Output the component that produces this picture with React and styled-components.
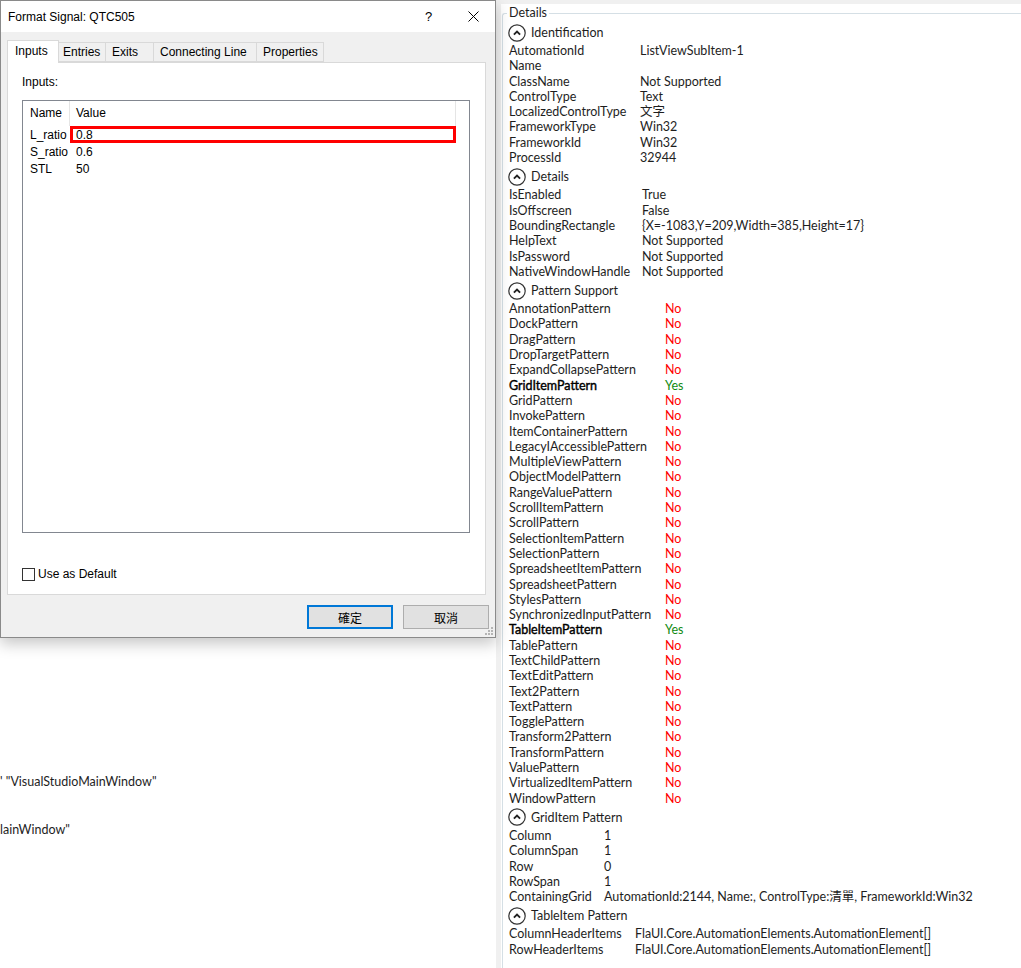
import React from "react";
import styled, { createGlobalStyle } from "styled-components";

const GlobalStyle = createGlobalStyle`
  html, body {
    margin: 0;
    padding: 0;
    background: #fff;
  }
  body {
    width: 1021px;
    height: 968px;
    overflow: hidden;
    font-family: "Liberation Sans", "Noto Sans CJK TC", sans-serif;
  }
`;

const uiFont = `"Lato", "Noto Sans CJK TC", sans-serif`;

const Page = styled.div`
  display: flex;
  width: 1021px;
  height: 968px;
  overflow: hidden;
`;

/* ---------- left: dialog over the background window ---------- */

const LeftPane = styled.div`
  width: 496px;
  flex: none;
  display: flex;
  flex-direction: column;
  position: relative;
  z-index: 1;
`;

const Dialog = styled.div`
  width: 496px;
  height: 638px;
  box-sizing: border-box;
  border: 1px solid #8a8a8a;
  background: #f0f0f0;
  box-shadow: 0 6px 14px rgba(0, 0, 0, 0.22);
  display: flex;
  flex-direction: column;
  position: relative;
  flex: none;
`;

const TitleBar = styled.div`
  height: 31px;
  flex: none;
  background: #fff;
  display: flex;
  align-items: center;
`;

const Title = styled.div`
  flex: 1;
  padding-left: 7px;
  font-size: 12px;
  color: #000;
`;

const CaptionButton = styled.div`
  width: ${(p) => p.w || 45}px;
  height: 31px;
  display: flex;
  align-items: center;
  justify-content: center;
  font-size: 13px;
  color: #000;
`;

const DialogBody = styled.div`
  padding: 8px 6px 0 6px;
  display: flex;
  flex-direction: column;
`;

const TabRow = styled.div`
  display: flex;
  align-items: flex-end;
  height: 23px;
  margin-bottom: -1px;
  position: relative;
  z-index: 1;
`;

const Tab = styled.div`
  box-sizing: border-box;
  width: ${(p) => p.w}px;
  height: ${(p) => (p.active ? 23 : 20)}px;
  margin-bottom: ${(p) => (p.active ? 0 : 1)}px;
  margin-left: ${(p) => (p.first ? 0 : -1)}px;
  padding-left: ${(p) => p.pad || 6}px;
  padding-top: ${(p) => (p.active ? 3 : 2)}px;
  background: ${(p) => (p.active ? "#fff" : "#f0f0f0")};
  border: 1px solid #d9d9d9;
  border-bottom: ${(p) => (p.active ? "none" : "1px solid #d9d9d9")};
  position: relative;
  z-index: ${(p) => (p.active ? 2 : 1)};
  font-size: 12px;
  line-height: 15px;
  color: #000;
  white-space: nowrap;
`;

const TabPanel = styled.div`
  width: 479px;
  height: 533px;
  box-sizing: border-box;
  background: #fff;
  border: 1px solid #d9d9d9;
  padding: 11px 0 0 14px;
`;

const PanelLabel = styled.div`
  font-size: 12px;
  line-height: 16px;
  color: #000;
`;

const ListBox = styled.div`
  margin-top: 10px;
  width: 448px;
  height: 433px;
  box-sizing: border-box;
  border: 1px solid #828790;
  background: #fff;
`;

const ListHeader = styled.div`
  display: flex;
  height: 25px;
`;

const HeaderCell = styled.div`
  box-sizing: border-box;
  width: ${(p) => p.w}px;
  padding-left: ${(p) => p.pad}px;
  border-right: 1px solid #e5e5e5;
  font-size: 12px;
  line-height: 25px;
  color: #000;
`;

const ListRow = styled.div`
  display: flex;
  height: 17px;
`;

const Cell = styled.div`
  box-sizing: border-box;
  width: ${(p) => p.w}px;
  height: 17px;
  padding-left: ${(p) => (p.marked ? 3 : p.pad)}px;
  border: ${(p) => (p.marked ? "3px solid #ff0000" : "none")};
  font-size: 12px;
  line-height: ${(p) => (p.marked ? 12 : 18)}px;
  color: #000;
`;

const CheckRow = styled.div`
  margin-top: 34px;
  display: flex;
  align-items: center;
  gap: 3px;
  font-size: 12px;
  color: #000;
`;

const CheckBox = styled.div`
  width: 13px;
  height: 13px;
  box-sizing: border-box;
  border: 1px solid #333;
  background: #fff;
`;

const ButtonRow = styled.div`
  margin-top: 10px;
  display: flex;
  justify-content: flex-end;
  gap: 10px;
`;

const Button = styled.div`
  width: 86px;
  height: 24px;
  box-sizing: border-box;
  background: #e1e1e1;
  border: ${(p) => (p.primary ? "2px solid #0078d7" : "1px solid #adadad")};
  display: flex;
  align-items: center;
  justify-content: center;
  font-family: "Noto Sans CJK TC", sans-serif;
  font-size: 12px;
  color: #000;
`;

const Grip = styled.svg`
  position: absolute;
  right: 1px;
  bottom: 1px;
`;

const Backdrop = styled.div`
  flex: 1;
  font-family: ${uiFont};
  font-size: 12.5px;
  color: #1e1e1e;
`;

const BackdropLine = styled.div`
  margin-top: ${(p) => p.top}px;
  line-height: 16px;
  white-space: nowrap;
`;

/* ---------- right: details pane ---------- */

const RightPane = styled.div`
  flex: 1;
  min-width: 0;
  background: #fff;
  border-top: 4px solid #f0f0f0;
  border-left: 5px solid #f0f0f0;
  padding-left: 1px;
  overflow: hidden;
  font-family: ${uiFont};
  color: #1e1e1e;
`;

const GroupBox = styled.fieldset`
  margin: 0;
  padding: 0 0 0 6px;
  min-width: 0;
  height: 1000px;
  border: 1px solid #d5dfe5;
  border-right: none;
  border-bottom: none;
  border-radius: 3px 0 0 0;
`;

const Legend = styled.legend`
  padding: 0 2px;
  margin-left: -2px;
  font-size: 12.5px;
  line-height: 18px;
  color: #1e1e1e;
`;

const SectionHeader = styled.div`
  display: flex;
  align-items: center;
  gap: 5px;
  height: 21px;
  margin-top: ${(p) => (p.first ? 0 : 1)}px;
  margin-left: -1px;
  font-size: 12.5px;
`;

const Rows = styled.div`
  display: grid;
  grid-template-columns: ${(p) => p.label}px 1fr;
  grid-auto-rows: 15.3px;
  line-height: 15.3px;
  font-size: 12.5px;
  white-space: nowrap;
`;

const Label = styled.div`
  color: ${(p) => (p.strong ? "#000" : "#1e1e1e")};
  -webkit-text-stroke: ${(p) => (p.strong ? "0.4px #000" : "0")};
`;

const Value = styled.div`
  color: ${(p) => (p.state === "yes" ? "#108a10" : p.state === "no" ? "#ff0000" : "#1e1e1e")};
`;

const CollapseIcon = () => (
  <svg width="18" height="18" viewBox="0 0 18 18">
    <circle cx="9" cy="9" r="8.2" fill="none" stroke="#333" strokeWidth="1.2" />
    <path d="M5.9 10.6 L9 7.5 L12.1 10.6" fill="none" stroke="#222" strokeWidth="1.9" />
  </svg>
);

const Section = ({ title, label, rows, first }) => (
  <>
    <SectionHeader first={first}>
      <CollapseIcon />
      <span>{title}</span>
    </SectionHeader>
    <Rows label={label}>
      {rows.map(([k, v, state]) => (
        <React.Fragment key={k}>
          <Label strong={state === "yes"}>{k}</Label>
          <Value state={state}>{v}</Value>
        </React.Fragment>
      ))}
    </Rows>
  </>
);

const identification = [
  ["AutomationId", "ListViewSubItem-1"],
  ["Name", ""],
  ["ClassName", "Not Supported"],
  ["ControlType", "Text"],
  ["LocalizedControlType", "文字"],
  ["FrameworkType", "Win32"],
  ["FrameworkId", "Win32"],
  ["ProcessId", "32944"],
];

const details = [
  ["IsEnabled", "True"],
  ["IsOffscreen", "False"],
  ["BoundingRectangle", "{X=-1083,Y=209,Width=385,Height=17}"],
  ["HelpText", "Not Supported"],
  ["IsPassword", "Not Supported"],
  ["NativeWindowHandle", "Not Supported"],
];

const patternNames = [
  "AnnotationPattern",
  "DockPattern",
  "DragPattern",
  "DropTargetPattern",
  "ExpandCollapsePattern",
  "GridItemPattern",
  "GridPattern",
  "InvokePattern",
  "ItemContainerPattern",
  "LegacyIAccessiblePattern",
  "MultipleViewPattern",
  "ObjectModelPattern",
  "RangeValuePattern",
  "ScrollItemPattern",
  "ScrollPattern",
  "SelectionItemPattern",
  "SelectionPattern",
  "SpreadsheetItemPattern",
  "SpreadsheetPattern",
  "StylesPattern",
  "SynchronizedInputPattern",
  "TableItemPattern",
  "TablePattern",
  "TextChildPattern",
  "TextEditPattern",
  "Text2Pattern",
  "TextPattern",
  "TogglePattern",
  "Transform2Pattern",
  "TransformPattern",
  "ValuePattern",
  "VirtualizedItemPattern",
  "WindowPattern",
];
const supported = ["GridItemPattern", "TableItemPattern"];
const patterns = patternNames.map((n) =>
  supported.includes(n) ? [n, "Yes", "yes"] : [n, "No", "no"]
);

const gridItem = [
  ["Column", "1"],
  ["ColumnSpan", "1"],
  ["Row", "0"],
  ["RowSpan", "1"],
  ["ContainingGrid", "AutomationId:2144, Name:, ControlType:清單, FrameworkId:Win32"],
];

const tableItem = [
  ["ColumnHeaderItems", "FlaUI.Core.AutomationElements.AutomationElement[]"],
  ["RowHeaderItems", "FlaUI.Core.AutomationElements.AutomationElement[]"],
];

const tabs = [
  { name: "Inputs", w: 52, pad: 7, active: true },
  { name: "Entries", w: 48, pad: 4 },
  { name: "Exits", w: 49 },
  { name: "Connecting Line", w: 104 },
  { name: "Properties", w: 68 },
];

const inputs = [
  ["L_ratio", "0.8", true],
  ["S_ratio", "0.6"],
  ["STL", "50"],
];

export default function App() {
  return (
    <Page>
      <GlobalStyle />
      <LeftPane>
        <Dialog>
          <TitleBar>
            <Title>Format Signal: QTC505</Title>
            <CaptionButton>?</CaptionButton>
            <CaptionButton w={44}>
              <svg width="11" height="11" viewBox="0 0 11 11">
                <path d="M0.5 0.5 L10.5 10.5 M10.5 0.5 L0.5 10.5" stroke="#000" strokeWidth="1" />
              </svg>
            </CaptionButton>
          </TitleBar>
          <DialogBody>
            <TabRow>
              {tabs.map((t, i) => (
                <Tab key={t.name} w={t.w} pad={t.pad} active={t.active} first={i === 0}>
                  {t.name}
                </Tab>
              ))}
            </TabRow>
            <TabPanel>
              <PanelLabel>Inputs:</PanelLabel>
              <ListBox>
                <ListHeader>
                  <HeaderCell w={47} pad={7}>Name</HeaderCell>
                  <HeaderCell w={386} pad={6}>Value</HeaderCell>
                </ListHeader>
                {inputs.map(([n, v, marked]) => (
                  <ListRow key={n}>
                    <Cell w={47} pad={7}>{n}</Cell>
                    <Cell w={386} pad={6} marked={marked}>{v}</Cell>
                  </ListRow>
                ))}
              </ListBox>
              <CheckRow>
                <CheckBox />
                <span>Use as Default</span>
              </CheckRow>
            </TabPanel>
            <ButtonRow>
              <Button primary>確定</Button>
              <Button>取消</Button>
            </ButtonRow>
          </DialogBody>
          <Grip width="10" height="10" viewBox="0 0 10 10">
            <g fill="#b4b4b4">
              <rect x="7" y="1" width="2" height="2" />
              <rect x="4" y="4" width="2" height="2" />
              <rect x="7" y="4" width="2" height="2" />
              <rect x="1" y="7" width="2" height="2" />
              <rect x="4" y="7" width="2" height="2" />
              <rect x="7" y="7" width="2" height="2" />
            </g>
          </Grip>
        </Dialog>
        <Backdrop>
          <BackdropLine top={136}>' "VisualStudioMainWindow"</BackdropLine>
          <BackdropLine top={32}>lainWindow"</BackdropLine>
        </Backdrop>
      </LeftPane>

      <RightPane>
        <GroupBox>
          <Legend>Details</Legend>
          <Section first title="Identification" label={131} rows={identification} />
          <Section title="Details" label={133} rows={details} />
          <Section title="Pattern Support" label={156} rows={patterns} />
          <Section title="GridItem Pattern" label={95} rows={gridItem} />
          <Section title="TableItem Pattern" label={126} rows={tableItem} />
        </GroupBox>
      </RightPane>
    </Page>
  );
}
